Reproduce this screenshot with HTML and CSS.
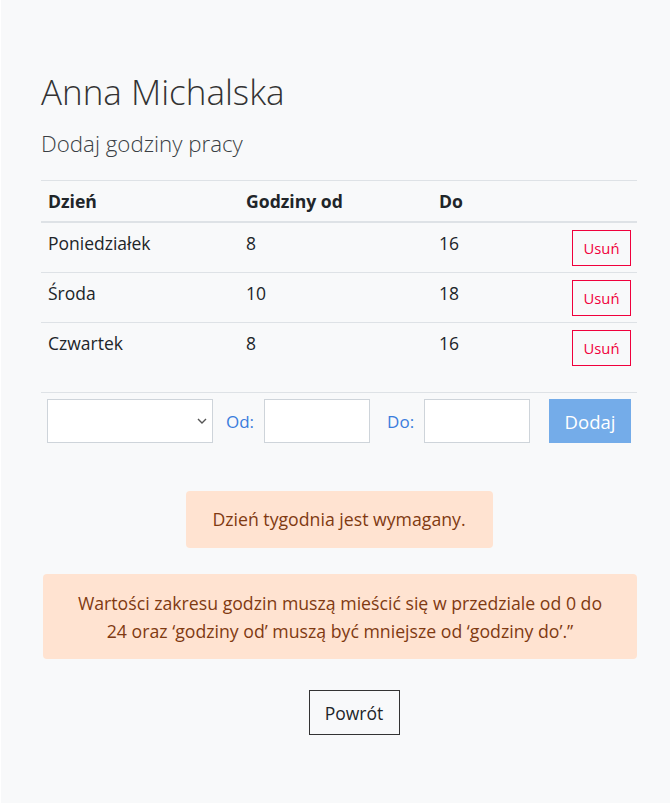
FILE: index.html
```html
<!DOCTYPE html>
<html lang="pl">
<head>
<meta charset="utf-8">
<title>Anna Michalska</title>
<link rel="stylesheet" href="styles.css">
</head>
<body>
<div class="page">
  <h1 class="title">Anna Michalska</h1>
  <h2 class="subtitle">Dodaj godziny pracy</h2>
  <table class="hours">
    <thead>
      <tr>
        <th class="c-day">Dzień</th>
        <th class="c-from">Godziny od</th>
        <th class="c-to">Do</th>
        <th class="c-act"></th>
      </tr>
    </thead>
    <tbody>
      <tr>
        <td>Poniedziałek</td>
        <td>8</td>
        <td>16</td>
        <td class="act"><button class="btn-del">Usuń</button></td>
      </tr>
      <tr>
        <td>Środa</td>
        <td>10</td>
        <td>18</td>
        <td class="act"><button class="btn-del">Usuń</button></td>
      </tr>
      <tr>
        <td>Czwartek</td>
        <td>8</td>
        <td>16</td>
        <td class="act"><button class="btn-del">Usuń</button></td>
      </tr>
    </tbody>
  </table>
  <form class="add-row">
    <div class="select-wrap">
      <select class="day-select"><option></option></select>
      <svg class="chev" width="10" height="6" viewBox="0 0 10 6"><path d="M1 1l4 4 4-4" fill="none" stroke="#555" stroke-width="1.4"/></svg>
    </div>
    <label class="lbl">Od:</label>
    <input class="num" type="text">
    <label class="lbl lbl-do">Do:</label>
    <input class="num" type="text">
    <button type="button" class="btn-add">Dodaj</button>
  </form>
  <div class="alerts">
    <div class="alert alert-short">Dzień tygodnia jest wymagany.</div>
    <div class="alert alert-long">Wartości zakresu godzin muszą mieścić się w przedziale od 0 do<br>24 oraz ‘godziny od’ muszą być mniejsze od ‘godziny do’.”</div>
  </div>
  <div class="back-row">
    <button class="btn-back">Powrót</button>
  </div>
</div>
</body>
</html>
```
FILE: styles.css
```css
* { box-sizing: border-box; }
html, body { margin: 0; padding: 0; background: #fff; }
body {
  font-family: "Open Sans", "Noto Sans", sans-serif;
  color: #212529;
}
.page {
  margin-left: 1px;
  min-height: 803px;
  background: #f8f9fa;
  padding: 70px 33px 40px 40px;
}
.title {
  margin: 0;
  font-size: 35px;
  font-weight: 300;
  line-height: 44px;
  color: #333;
}
.subtitle {
  margin: 16px 0 0;
  font-size: 22.3px;
  font-weight: 300;
  line-height: 28px;
  color: #3a3f44;
}
.hours {
  margin-top: 22px;
  width: 596px;
  border-collapse: collapse;
  font-size: 17.5px;
}
.hours th, .hours td {
  text-align: left;
  padding: 8px 7px;
  line-height: 24px;
  border-top: 1px solid #dee2e6;
  vertical-align: top;
}
.hours th { font-weight: 700; font-size: 17.6px; border-bottom: 2px solid #dee2e6; }
.c-day { width: 198px; }
.c-from { width: 193px; }
.c-to { width: 113px; }
.hours td.act { text-align: right; padding: 7px 6px 6px 7px; }
.btn-del {
  display: inline-block;
  vertical-align: top;
  font: inherit;
  font-size: 14.8px;
  line-height: 20px;
  color: #f0003c;
  background: transparent;
  border: 1px solid #f0003c;
  width: 59px;
  height: 36px;
  padding: 0;
  border-radius: 0;
}
.add-row {
  margin-top: 20px;
  border-top: 1px solid #dee2e6;
  padding: 6px 6px 0 6px;
  display: flex;
  align-items: center;
  width: 596px;
}
.select-wrap { position: relative; width: 166px; height: 44px; }
.day-select {
  width: 166px;
  height: 44px;
  border: 1px solid #ced4da;
  background: #fff;
  appearance: none;
  border-radius: 0;
}
.chev { position: absolute; right: 6px; top: 19px; }
.lbl {
  color: #3b7ddd;
  font-size: 17px;
  margin: 0 10px 0 13px;
}
.lbl-do { margin-left: 17px; }
.num {
  width: 106px;
  height: 44px;
  border: 1px solid #ced4da;
  background: #fff;
  border-radius: 0;
}
.btn-add {
  margin-left: auto;
  width: 82px;
  height: 44px;
  border: 0;
  background: #74ace9;
  color: #fff;
  font: inherit;
  font-size: 18.5px;
}
.alerts {
  margin-top: 48px;
  display: flex;
  flex-direction: column;
  align-items: center;
  gap: 26px;
}
.alert {
  background: #ffe3d1;
  color: #7f3a12;
  border-radius: 4px;
  font-size: 17.7px;
  text-align: center;
}
.alert-short { width: 307px; padding: 16px 6px; line-height: 25px; }
.alert-long { width: 594px; align-self: flex-start; margin-left: 2px; padding: 15px 6px 14px; line-height: 28px; }
.back-row { margin-top: 31px; display: flex; justify-content: center; padding-left: 30px; }
.btn-back {
  font: inherit;
  font-size: 17.5px;
  color: #212529;
  background: transparent;
  border: 1px solid #333;
  width: 91px;
  height: 45px;
  padding: 0;
  border-radius: 0;
}
```
